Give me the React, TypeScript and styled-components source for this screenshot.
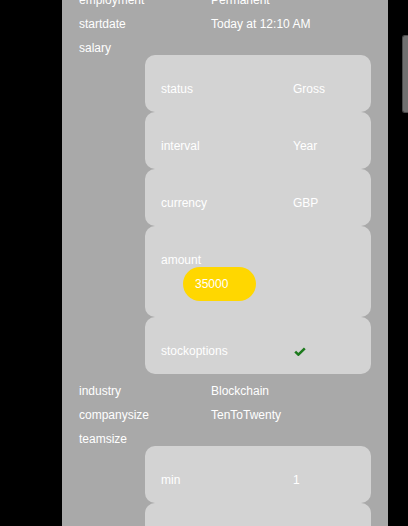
import styled, { createGlobalStyle } from "styled-components";

const GlobalStyle = createGlobalStyle`
  html, body {
    margin: 0;
    padding: 0;
    background: #000;
    overflow: hidden;
  }
  body {
    font-family: "Liberation Sans", Arial, sans-serif;
  }
`;

const Page = styled.div`
  width: 408px;
  height: 526px;
  background: #000;
  overflow: hidden;
`;

const Panel = styled.div`
  margin-left: 62px;
  width: 326px;
  min-height: 560px;
  background: #a9a9a9;
  padding: 0 17px;
  box-sizing: border-box;
`;

const List = styled.div`
  display: flex;
  flex-direction: column;
  margin-top: -7px;
`;

const Row = styled.div<{ $inCard?: boolean }>`
  display: flex;
  align-items: center;
  color: #fff;
  font-size: 12px;
  line-height: 14px;
  margin-bottom: ${(p) => (p.$inCard ? "0" : "10px")};
`;

const Key = styled.div`
  width: 132px;
  flex-shrink: 0;
`;

const Value = styled.div`
  flex: 1;
`;

const Nested = styled.div`
  margin-left: 66px;
  margin-bottom: 10px;
  display: flex;
  flex-direction: column;
`;

const Card = styled.div`
  background: #d3d3d3;
  border-radius: 10px;
  padding: 27px 16px 16px;
  display: flex;
  flex-direction: column;
`;

const Pill = styled.div`
  margin-left: 22px;
  width: 73px;
  height: 34px;
  border-radius: 17px;
  background: #ffd700;
  color: #fff;
  font-size: 12px;
  line-height: 34px;
  padding-left: 12px;
  box-sizing: border-box;
`;

const Thumb = styled.div`
  position: fixed;
  top: 35px;
  right: 0;
  width: 5px;
  height: 76px;
  background: #707070;
  border: 1px solid #4a4a4a;
  border-right: none;
  border-radius: 3px 0 0 3px;
`;

function Check() {
  return (
    <svg width="12" height="9" viewBox="0 0 12 9" style={{ display: "block", marginLeft: 1 }}>
      <path d="M1.2 4.6 L4.4 7.6 L10.8 1.4" fill="none" stroke="#1d7a1d" strokeWidth="2.6" />
    </svg>
  );
}

function Field({ k, v }: { k: string; v?: React.ReactNode }) {
  return (
    <Row>
      <Key>{k}</Key>
      <Value>{v}</Value>
    </Row>
  );
}

function CardField({ k, v }: { k: string; v?: React.ReactNode }) {
  return (
    <Card>
      <Row $inCard>
        <Key>{k}</Key>
        <Value>{v}</Value>
      </Row>
    </Card>
  );
}

export default function App() {
  return (
    <Page>
      <GlobalStyle />
      <Panel>
        <List>
          <Field k="employment" v="Permanent" />
          <Field k="startdate" v="Today at 12:10 AM" />
          <Row style={{ marginBottom: 0 }}>
            <Key>salary</Key>
          </Row>
          <Nested>
            <CardField k="status" v="Gross" />
            <CardField k="interval" v="Year" />
            <CardField k="currency" v="GBP" />
            <Card>
              <Row $inCard>
                <Key>amount</Key>
              </Row>
              <Pill>35000</Pill>
            </Card>
            <CardField k="stockoptions" v={<Check />} />
          </Nested>
          <Field k="industry" v="Blockchain" />
          <Field k="companysize" v="TenToTwenty" />
          <Row style={{ marginBottom: 0 }}>
            <Key>teamsize</Key>
          </Row>
          <Nested>
            <CardField k="min" v="1" />
            <CardField k="max" v="10" />
          </Nested>
        </List>
      </Panel>
      <Thumb />
    </Page>
  );
}
